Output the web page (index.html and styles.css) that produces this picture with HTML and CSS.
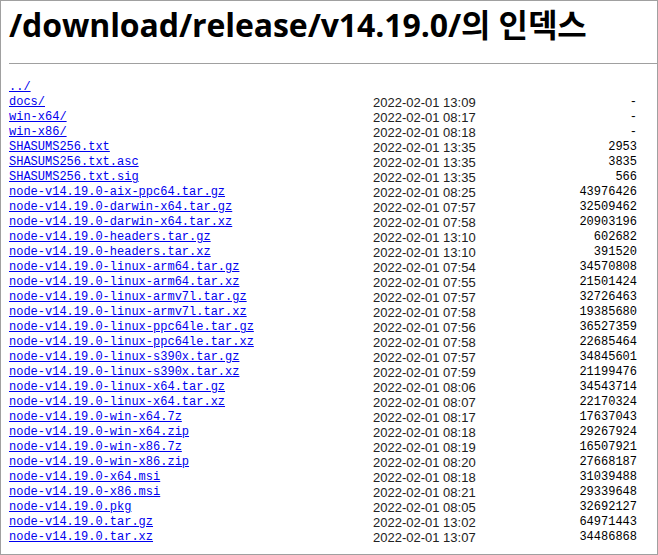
FILE: index.html
```html
<!DOCTYPE html>
<html lang="ko">
<head>
<meta charset="utf-8">
<title>/download/release/v14.19.0/의 인덱스</title>
<link rel="stylesheet" href="styles.css">
</head>
<body>
<h1 class="title">/download/release/v14.19.0/의 인덱스</h1>
<hr class="rule">
<div class="listing">
  <div class="row"><a class="name" href="#">../</a><span class="date"></span><span class="size"></span></div>
  <div class="row"><a class="name" href="#">docs/</a><span class="date">2022-02-01 13:09</span><span class="size">-</span></div>
  <div class="row"><a class="name" href="#">win-x64/</a><span class="date">2022-02-01 08:17</span><span class="size">-</span></div>
  <div class="row"><a class="name" href="#">win-x86/</a><span class="date">2022-02-01 08:18</span><span class="size">-</span></div>
  <div class="row"><a class="name" href="#">SHASUMS256.txt</a><span class="date">2022-02-01 13:35</span><span class="size">2953</span></div>
  <div class="row"><a class="name" href="#">SHASUMS256.txt.asc</a><span class="date">2022-02-01 13:35</span><span class="size">3835</span></div>
  <div class="row"><a class="name" href="#">SHASUMS256.txt.sig</a><span class="date">2022-02-01 13:35</span><span class="size">566</span></div>
  <div class="row"><a class="name" href="#">node-v14.19.0-aix-ppc64.tar.gz</a><span class="date">2022-02-01 08:25</span><span class="size">43976426</span></div>
  <div class="row"><a class="name" href="#">node-v14.19.0-darwin-x64.tar.gz</a><span class="date">2022-02-01 07:57</span><span class="size">32509462</span></div>
  <div class="row"><a class="name" href="#">node-v14.19.0-darwin-x64.tar.xz</a><span class="date">2022-02-01 07:58</span><span class="size">20903196</span></div>
  <div class="row"><a class="name" href="#">node-v14.19.0-headers.tar.gz</a><span class="date">2022-02-01 13:10</span><span class="size">602682</span></div>
  <div class="row"><a class="name" href="#">node-v14.19.0-headers.tar.xz</a><span class="date">2022-02-01 13:10</span><span class="size">391520</span></div>
  <div class="row"><a class="name" href="#">node-v14.19.0-linux-arm64.tar.gz</a><span class="date">2022-02-01 07:54</span><span class="size">34570808</span></div>
  <div class="row"><a class="name" href="#">node-v14.19.0-linux-arm64.tar.xz</a><span class="date">2022-02-01 07:55</span><span class="size">21501424</span></div>
  <div class="row"><a class="name" href="#">node-v14.19.0-linux-armv7l.tar.gz</a><span class="date">2022-02-01 07:57</span><span class="size">32726463</span></div>
  <div class="row"><a class="name" href="#">node-v14.19.0-linux-armv7l.tar.xz</a><span class="date">2022-02-01 07:58</span><span class="size">19385680</span></div>
  <div class="row"><a class="name" href="#">node-v14.19.0-linux-ppc64le.tar.gz</a><span class="date">2022-02-01 07:56</span><span class="size">36527359</span></div>
  <div class="row"><a class="name" href="#">node-v14.19.0-linux-ppc64le.tar.xz</a><span class="date">2022-02-01 07:58</span><span class="size">22685464</span></div>
  <div class="row"><a class="name" href="#">node-v14.19.0-linux-s390x.tar.gz</a><span class="date">2022-02-01 07:57</span><span class="size">34845601</span></div>
  <div class="row"><a class="name" href="#">node-v14.19.0-linux-s390x.tar.xz</a><span class="date">2022-02-01 07:59</span><span class="size">21199476</span></div>
  <div class="row"><a class="name" href="#">node-v14.19.0-linux-x64.tar.gz</a><span class="date">2022-02-01 08:06</span><span class="size">34543714</span></div>
  <div class="row"><a class="name" href="#">node-v14.19.0-linux-x64.tar.xz</a><span class="date">2022-02-01 08:07</span><span class="size">22170324</span></div>
  <div class="row"><a class="name" href="#">node-v14.19.0-win-x64.7z</a><span class="date">2022-02-01 08:17</span><span class="size">17637043</span></div>
  <div class="row"><a class="name" href="#">node-v14.19.0-win-x64.zip</a><span class="date">2022-02-01 08:18</span><span class="size">29267924</span></div>
  <div class="row"><a class="name" href="#">node-v14.19.0-win-x86.7z</a><span class="date">2022-02-01 08:19</span><span class="size">16507921</span></div>
  <div class="row"><a class="name" href="#">node-v14.19.0-win-x86.zip</a><span class="date">2022-02-01 08:20</span><span class="size">27668187</span></div>
  <div class="row"><a class="name" href="#">node-v14.19.0-x64.msi</a><span class="date">2022-02-01 08:18</span><span class="size">31039488</span></div>
  <div class="row"><a class="name" href="#">node-v14.19.0-x86.msi</a><span class="date">2022-02-01 08:21</span><span class="size">29339648</span></div>
  <div class="row"><a class="name" href="#">node-v14.19.0.pkg</a><span class="date">2022-02-01 08:05</span><span class="size">32692127</span></div>
  <div class="row"><a class="name" href="#">node-v14.19.0.tar.gz</a><span class="date">2022-02-01 13:02</span><span class="size">64971443</span></div>
  <div class="row"><a class="name" href="#">node-v14.19.0.tar.xz</a><span class="date">2022-02-01 13:07</span><span class="size">34486868</span></div>
</div>
</body>
</html>
```
FILE: styles.css
```css
html, body {
  margin: 0;
  padding: 0;
}
body {
  box-sizing: border-box;
  height: 555px;
  border: 1px solid #a0a0a0;
  padding-left: 8px;
  overflow: hidden;
  background: #fff;
  color: #000;
}
.title {
  margin: 0;
  padding-top: 4px;
  font-family: "Open Sans", "Noto Sans CJK KR", sans-serif;
  font-weight: 700;
  font-size: 32px;
  letter-spacing: -0.1px;
  line-height: 40px;
  color: #000;
  white-space: nowrap;
}
.rule {
  margin: 18px 0 0 0;
  height: 0;
  border: 0;
  border-top: 1px solid #a0a0a0;
}
.listing {
  margin-top: 16px;
  width: 628px;
}
.row {
  display: grid;
  grid-template-columns: 364px 1fr 100px;
  height: 15px;
  line-height: 15px;
}
.name {
  font-family: "Liberation Mono", monospace;
  font-size: 12px;
  color: #0000ee;
  text-decoration: underline;
  justify-self: start;
  white-space: nowrap;
}
.date {
  font-family: "Liberation Sans", sans-serif;
  font-size: 13px;
  color: #222;
  white-space: nowrap;
}
.size {
  font-family: "Liberation Mono", monospace;
  font-size: 12px;
  color: #000;
  text-align: right;
}
```
